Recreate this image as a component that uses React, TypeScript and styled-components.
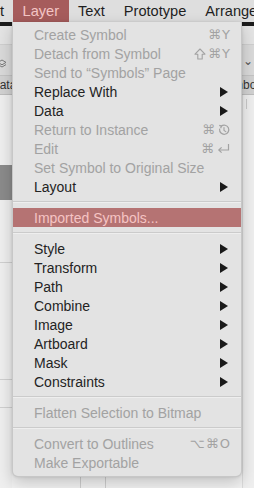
import React from "react";
import styled, { createGlobalStyle } from "styled-components";

const GlobalStyle = createGlobalStyle`
  html, body {
    margin: 0;
    padding: 0;
    width: 254px;
    height: 488px;
    overflow: hidden;
    background: #f1f1f1;
  }
  body {
    font-family: "Liberation Sans", Arial, sans-serif;
  }
`;

type Entry =
  | { kind: "sep" }
  | {
      kind: "item";
      label: string;
      disabled?: boolean;
      active?: boolean;
      shortcut?: React.ReactNode;
      submenu?: boolean;
    };

const ShiftGlyph = () => (
  <svg width="12" height="12" viewBox="0 0 12 12" fill="none">
    <path
      d="M6 1 L11 6.2 H8.2 V11 H3.8 V6.2 H1 Z"
      stroke="currentColor"
      strokeWidth="1.1"
      strokeLinejoin="round"
    />
  </svg>
);

const RevertGlyph = () => (
  <svg width="12" height="12" viewBox="0 0 12 12" fill="none">
    <path
      d="M3.2 2.2 A4.6 4.6 0 1 1 1.6 5.2"
      stroke="currentColor"
      strokeWidth="1.2"
      strokeLinecap="round"
    />
    <path d="M1.2 1.4 L3.6 2.1 L2.6 4.2" stroke="currentColor" strokeWidth="1.2" strokeLinejoin="round" />
    <path d="M6 3.6 V6.4 L7.8 7.6" stroke="currentColor" strokeWidth="1.1" strokeLinecap="round" />
  </svg>
);

const ReturnGlyph = () => (
  <svg width="13" height="11" viewBox="0 0 13 11" fill="none">
    <path d="M11.5 1 V7 H2" stroke="currentColor" strokeWidth="1.2" />
    <path d="M4.6 4.4 L1.8 7 L4.6 9.6" stroke="currentColor" strokeWidth="1.2" strokeLinejoin="round" />
  </svg>
);

const entries: Entry[] = [
  { kind: "item", label: "Create Symbol", disabled: true, shortcut: "⌘Y" },
  {
    kind: "item",
    label: "Detach from Symbol",
    disabled: true,
    shortcut: (
      <>
        <ShiftGlyph />
        ⌘Y
      </>
    ),
  },
  { kind: "item", label: "Send to “Symbols” Page", disabled: true },
  { kind: "item", label: "Replace With", submenu: true },
  { kind: "item", label: "Data", submenu: true },
  {
    kind: "item",
    label: "Return to Instance",
    disabled: true,
    shortcut: (
      <>
        ⌘<RevertGlyph />
      </>
    ),
  },
  {
    kind: "item",
    label: "Edit",
    disabled: true,
    shortcut: (
      <>
        ⌘<ReturnGlyph />
      </>
    ),
  },
  { kind: "item", label: "Set Symbol to Original Size", disabled: true },
  { kind: "item", label: "Layout", submenu: true },
  { kind: "sep" },
  { kind: "item", label: "Imported Symbols...", active: true },
  { kind: "sep" },
  { kind: "item", label: "Style", submenu: true },
  { kind: "item", label: "Transform", submenu: true },
  { kind: "item", label: "Path", submenu: true },
  { kind: "item", label: "Combine", submenu: true },
  { kind: "item", label: "Image", submenu: true },
  { kind: "item", label: "Artboard", submenu: true },
  { kind: "item", label: "Mask", submenu: true },
  { kind: "item", label: "Constraints", submenu: true },
  { kind: "sep" },
  { kind: "item", label: "Flatten Selection to Bitmap", disabled: true },
  { kind: "sep" },
  { kind: "item", label: "Convert to Outlines", disabled: true, shortcut: "⌥⌘O" },
  { kind: "item", label: "Make Exportable", disabled: true },
];

const barItems = ["t", "Layer", "Text", "Prototype", "Arrange"];

export default function App() {
  return (
    <Screen>
      <GlobalStyle />
      <MenuBar>
        {barItems.map((name, i) => (
          <BarItem key={name} $first={i === 0} $open={name === "Layer"}>
            {name}
          </BarItem>
        ))}
      </MenuBar>
      <TitleStrip />
      <Window>
        <TopBand />
        <Toolbar>
          <ToolIcon>
            <svg width="10" height="10" viewBox="0 0 10 10" fill="none">
              <path d="M5 1 L9 3.4 L5 5.8 L1 3.4 Z" stroke="#7a7a7a" strokeWidth="1" />
              <path d="M1 5.6 L5 8 L9 5.6" stroke="#7a7a7a" strokeWidth="1" />
            </svg>
          </ToolIcon>
          <Chevron>⌄</Chevron>
        </Toolbar>
        <TabRow>
          <TabText $edge="left">Data</TabText>
          <TabText $edge="right">Symbols</TabText>
        </TabRow>
        <Workspace>
          <Sidebar>
            <SidebarGap $h={70} />
            <SelectedLayer />
            <SidebarGap $h={62} />
            <Rule />
            <SidebarGap $h={116} />
            <Rule />
            <SidebarGap $h={27} />
            <Rule />
          </Sidebar>
          <Canvas>
            <Guide $left={68} />
            <Guide $left={93} />
          </Canvas>
          <Inspector>
            <InspectorTick />
          </Inspector>
        </Workspace>
      </Window>

      <Menu>
        {entries.map((e, i) =>
          e.kind === "sep" ? (
            <Separator key={i} />
          ) : (
            <Item key={i} $disabled={e.disabled} $active={e.active}>
              <Label>{e.label}</Label>
              {e.shortcut && <Shortcut>{e.shortcut}</Shortcut>}
              {e.submenu && <Arrow />}
            </Item>
          )
        )}
      </Menu>
    </Screen>
  );
}

const Screen = styled.div`
  position: relative;
  width: 254px;
  height: 488px;
  overflow: hidden;
  display: flex;
  flex-direction: column;
  background: #f1f1f1;
`;

const MenuBar = styled.div`
  display: flex;
  align-items: stretch;
  height: 22px;
  background: #dedede;
  white-space: nowrap;
`;

const BarItem = styled.div<{ $first?: boolean; $open?: boolean }>`
  display: flex;
  align-items: center;
  padding: ${({ $first }) => ($first ? "0 9px 0 0" : "0 9.5px")};
  font-size: 14.6px;
  color: ${({ $open }) => ($open ? "#f4c6c6" : "#1e1e1e")};
  background: ${({ $open }) => ($open ? "#a65c5c" : "transparent")};
`;

const TitleStrip = styled.div`
  height: 4px;
  background: #1c1c1c;
`;

const Window = styled.div`
  flex: 1;
  display: flex;
  flex-direction: column;
`;

const TopBand = styled.div`
  height: 18px;
  background: #e4e4e4;
  border-bottom: 1px solid #cfcfcf;
`;

const Toolbar = styled.div`
  height: 30px;
  display: flex;
  justify-content: space-between;
  align-items: center;
  background: #dadada;
  border-bottom: 1px solid #c4c4c4;
`;

const ToolIcon = styled.div`
  display: flex;
  margin-left: -3px;
  margin-top: 8px;
`;

const Chevron = styled.div`
  font-family: "DejaVu Sans", sans-serif;
  font-size: 12px;
  color: #555;
  margin-right: 1px;
  margin-top: 2px;
`;

const TabRow = styled.div`
  height: 18px;
  display: flex;
  justify-content: space-between;
  align-items: center;
  background: #d2d2d2;
  border-bottom: 1px solid #bdbdbd;
  overflow: hidden;
`;

const TabText = styled.span<{ $edge: "left" | "right" }>`
  font-size: 12px;
  color: #333;
  margin-left: ${({ $edge }) => ($edge === "left" ? "-9px" : "0")};
  margin-right: ${({ $edge }) => ($edge === "right" ? "-11px" : "0")};
`;

const Workspace = styled.div`
  flex: 1;
  display: grid;
  grid-template-columns: 12px 1fr 12px;
`;

const Sidebar = styled.div`
  display: flex;
  flex-direction: column;
  background: #efefef;
`;

const SidebarGap = styled.div<{ $h: number }>`
  height: ${({ $h }) => $h}px;
`;

const SelectedLayer = styled.div`
  height: 35px;
  background: #8b8b8b;
`;

const Rule = styled.div`
  height: 1px;
  background: #d0d0d0;
`;

const Canvas = styled.div`
  position: relative;
  background: #f3f3f3;
`;

const Guide = styled.div<{ $left: number }>`
  position: absolute;
  left: ${({ $left }) => $left}px;
  bottom: 0;
  height: 22px;
  width: 1px;
  background: #cfcfcf;
`;

const Inspector = styled.div`
  position: relative;
  background: #efefef;
  border-left: 1px solid #dcdcdc;
`;

const InspectorTick = styled.div`
  position: absolute;
  left: 3px;
  top: 4px;
  width: 1px;
  height: 10px;
  background: #c9c9c9;
`;

const Menu = styled.div`
  position: absolute;
  top: 22px;
  left: 12px;
  width: 230px;
  padding: 3px 0 4px;
  box-sizing: border-box;
  background: #e3e3e3;
  border: 1px solid rgba(0, 0, 0, 0.12);
  border-top: none;
  border-radius: 0 0 6px 6px;
  box-shadow: 0 6px 16px rgba(0, 0, 0, 0.2), 0 0 3px rgba(0, 0, 0, 0.12);
`;

const Item = styled.div<{ $disabled?: boolean; $active?: boolean }>`
  display: flex;
  align-items: center;
  height: 19px;
  padding: 0 10px 0 21px;
  font-size: 14px;
  white-space: nowrap;
  color: ${({ $disabled, $active }) =>
    $active ? "#f6c4c4" : $disabled ? "#a2a2a2" : "#232323"};
  background: ${({ $active }) => ($active ? "#b57373" : "transparent")};
`;

const Label = styled.span`
  flex: 1;
`;

const Shortcut = styled.span`
  display: flex;
  align-items: center;
  gap: 1px;
  font-family: "DejaVu Sans", sans-serif;
  font-size: 13px;
  letter-spacing: 1px;
  svg {
    margin: 0 1px;
  }
`;

const Arrow = styled.span`
  width: 0;
  height: 0;
  margin-right: 3px;
  border-top: 5px solid transparent;
  border-bottom: 5px solid transparent;
  border-left: 8px solid #1a1a1a;
`;

const Separator = styled.div`
  height: 12px;
  display: flex;
  flex-direction: column;
  justify-content: center;
  &::before {
    content: "";
    height: 1px;
    background: #cbcbcb;
  }
  &::after {
    content: "";
    height: 1px;
    background: #eeeeee;
  }
`;
